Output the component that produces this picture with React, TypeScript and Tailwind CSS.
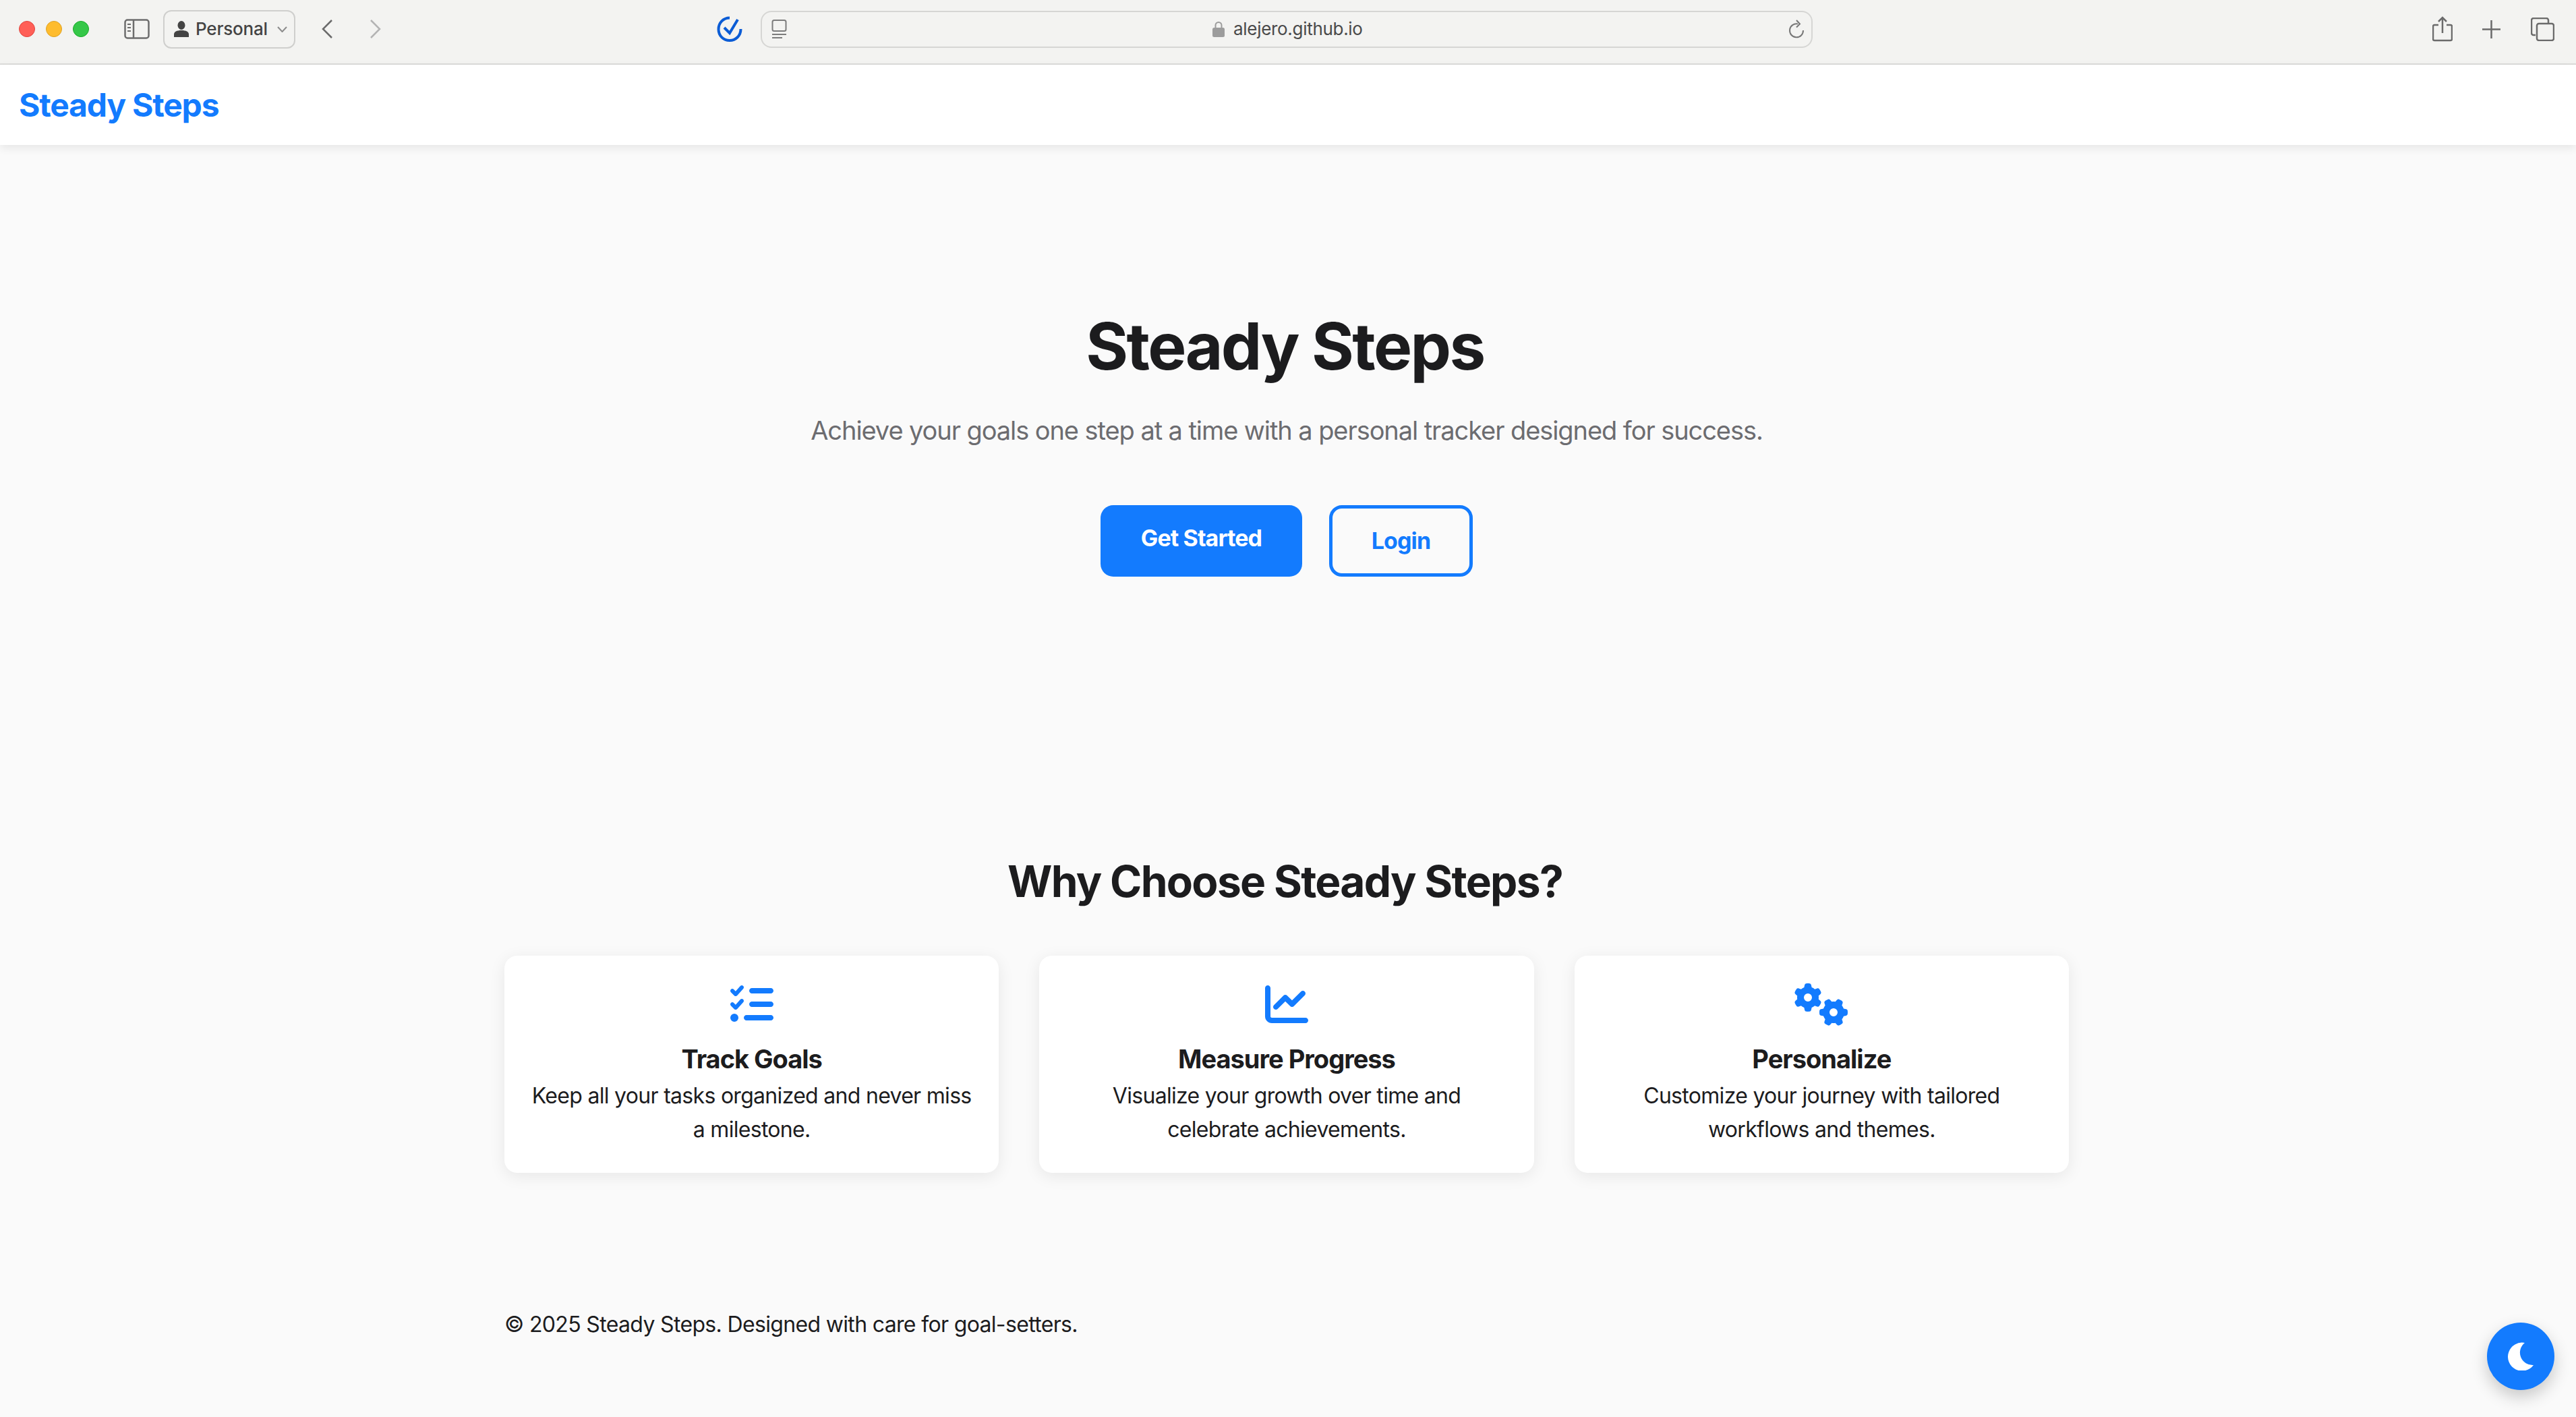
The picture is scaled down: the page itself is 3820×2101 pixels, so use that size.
import React from 'react';
import { FaListCheck, FaChartLine, FaGears } from 'react-icons/fa6';

const features = [
  { icon: <FaListCheck className="w-[64px] h-[64px]" />, title: 'Track Goals', lines: ['Keep all your tasks organized and never miss', 'a milestone.'] },
  { icon: <FaChartLine className="w-[64px] h-[64px]" />, title: 'Measure Progress', lines: ['Visualize your growth over time and', 'celebrate achievements.'] },
  { icon: <FaGears className="w-[80px] h-[64px]" />, title: 'Personalize', lines: ['Customize your journey with tailored', 'workflows and themes.'] },
];

const BrowserBar = () => (
  <div className="h-[96px] shrink-0 pb-[8px] flex items-center bg-[#f3f3f1] border-b-2 border-[#dcdcda] font-['Inter',sans-serif]">
    <div className="ml-[28px] flex gap-[16px]">
      <span className="w-[24px] h-[24px] rounded-full bg-[#ff5f57] border border-[#e0443e]" />
      <span className="w-[24px] h-[24px] rounded-full bg-[#febc2e] border border-[#dea123]" />
      <span className="w-[24px] h-[24px] rounded-full bg-[#35c748] border border-[#1aab29]" />
    </div>
    <svg className="ml-[52px] w-[38px] h-[30px] text-[#6d6d6d]" viewBox="0 0 38 30" fill="none" stroke="currentColor" strokeWidth="2.5">
      <rect x="1.5" y="1.5" width="35" height="27" rx="3.5" />
      <path d="M14 2v26" />
      <path d="M5 8h5M5 13h5M5 18h5" strokeWidth="2" />
    </svg>
    <div className="ml-[20px] w-[196px] h-[57px] flex items-center rounded-[12px] border-2 border-[#cfcfcd] text-[#444444]">
      <svg className="ml-[14px] w-[22px] h-[24px]" viewBox="0 0 22 24" fill="currentColor">
        <ellipse cx="11" cy="6.5" rx="5.5" ry="6.5" />
        <path d="M0 24v-4c0-4 4-6 11-6s11 2 11 6v4z" />
      </svg>
      <span className="ml-[10px] text-[26px] font-medium leading-none tracking-[-0.2px]">Personal</span>
      <svg className="ml-[14px] w-[15px] h-[9px] text-[#8c8c8c]" viewBox="0 0 15 9" fill="none" stroke="currentColor" strokeWidth="2">
        <path d="M1 1l6.5 7L14 1" />
      </svg>
    </div>
    <svg className="ml-[39px] w-[16px] h-[28px] text-[#6b6b6b]" viewBox="0 0 16 28" fill="none" stroke="currentColor" strokeWidth="2.5">
      <path d="M15 1L2 14l13 13" />
    </svg>
    <svg className="ml-[56px] w-[16px] h-[28px] text-[#b4b4b4]" viewBox="0 0 16 28" fill="none" stroke="currentColor" strokeWidth="2.5">
      <path d="M1 1l13 13L1 27" />
    </svg>
    <svg className="ml-[498px] w-[38px] h-[38px] text-[#0b5cd5]" viewBox="0 0 38 38" fill="none" stroke="currentColor" strokeWidth="4">
      <path d="M19 2.5C9.5 2.5 2.5 10 2.5 19.5S10 36 19 36s16.5-7 16.5-17" />
      <path d="M11 17l8 8L31 5" />
    </svg>
    <div className="ml-[27px] w-[1560px] h-[55px] flex items-center rounded-[16px] border-2 border-[#d6d6d4]">
      <svg className="ml-[14px] w-[23px] h-[28px] text-[#7c7c7c]" viewBox="0 0 23 28" fill="none" stroke="currentColor" strokeWidth="2">
        <rect x="1.5" y="1" width="20" height="16" rx="2.5" />
        <path d="M1 22h21M1 27h15" />
      </svg>
      <svg className="ml-[631px] w-[18px] h-[24px] text-[#9c9c9c]" viewBox="0 0 18 24" fill="currentColor">
        <path d="M3.5 10V6.5a5.5 5.5 0 0 1 11 0V10h-2V6.5a3.5 3.5 0 0 0-7 0V10z" />
        <rect x="0" y="10" width="18" height="14" rx="2.5" />
      </svg>
      <span className="ml-[13px] text-[26px] leading-none tracking-[-0.3px] text-[#4a4a4a]">alejero.github.io</span>
      <svg className="ml-auto mr-[10px] w-[24px] h-[28px] text-[#777777]" viewBox="0 0 24 28" fill="none" stroke="currentColor" strokeWidth="2">
        <path d="M14 6.5A10 10 0 1 0 22 16" />
        <path d="M12 1l5 5.5-5 5" />
      </svg>
    </div>
    <svg className="ml-[919px] w-[30px] h-[38px] text-[#6b6b6b]" viewBox="0 0 30 38" fill="none" stroke="currentColor" strokeWidth="2.5">
      <path d="M9 13H3a2 2 0 0 0-2 2v19a2 2 0 0 0 2 2h24a2 2 0 0 0 2-2V15a2 2 0 0 0-2-2h-6" />
      <path d="M15 25V2M9 8l6-6 6 6" />
    </svg>
    <svg className="ml-[44px] w-[27px] h-[27px] text-[#6b6b6b]" viewBox="0 0 27 27" fill="none" stroke="currentColor" strokeWidth="2.5">
      <path d="M13.5 0v27M0 13.5h27" />
    </svg>
    <svg className="ml-[45px] w-[35px] h-[35px] text-[#6b6b6b]" viewBox="0 0 35 35" fill="none" stroke="currentColor" strokeWidth="2.5">
      <path d="M7 26H4a3 3 0 0 1-3-3V4a3 3 0 0 1 3-3h19a3 3 0 0 1 3 3v4" />
      <rect x="9" y="9" width="25" height="25" rx="3" />
    </svg>
  </div>
);

export default function App() {
  return (
    <div className="relative h-[2101px] overflow-hidden flex flex-col bg-[#fafafa] font-['Inter',sans-serif] text-[#1c1c1e]">
      <BrowserBar />
      <nav className="relative h-[119px] shrink-0 flex items-center pl-[28px] bg-white shadow-[0_5px_12px_rgba(0,0,0,0.08)]">
        <span className="text-[48px] font-bold tracking-[-1.2px] text-[#137bfe]">Steady Steps</span>
      </nav>
      <main className="pr-[4px] flex flex-col items-center">
        <h1 className="mt-[241px] mr-[5px] text-[96px] leading-[115px] font-bold tracking-[-2.6px]">Steady Steps</h1>
        <p className="mt-[38px] text-[38px] leading-[58px] tracking-[-1.08px] text-[#6c6c70]">Achieve your goals one step at a time with a personal tracker designed for success.</p>
        <div className="mt-[82px] flex gap-[40px]">
          <button className="w-[299px] h-[106px] pb-[9px] rounded-[19px] bg-[#137bfe] text-white text-[34px] font-bold tracking-[-0.9px]">Get Started</button>
          <button className="w-[213px] h-[106px] pb-[2px] rounded-[19px] border-[5px] border-[#137bfe] text-[#137bfe] text-[34px] font-bold tracking-[-0.9px]">Login</button>
        </div>
        <h2 className="mt-[413px] mr-[5px] text-[64px] leading-[77px] font-bold tracking-[-1.7px]">Why Choose Steady Steps?</h2>
        <div className="mt-[72px] w-[2320px] grid grid-cols-3 gap-[60px]">
          {features.map((f) => (
            <div key={f.title} className="h-[322px] pt-[40px] flex flex-col items-center rounded-[19px] bg-white shadow-[0_5px_24px_rgba(0,0,0,0.08)]">
              <div className="h-[64px] flex items-center text-[#137bfe]">{f.icon}</div>
              <h3 className="mt-[24px] text-[38px] leading-[50px] font-bold tracking-[-1px]">{f.title}</h3>
              <div className="mt-[5px] flex flex-col items-center">
                {f.lines.map((l) => (
                  <p key={l} className="text-[32px] leading-[50px] tracking-[-0.7px]">{l}</p>
                ))}
              </div>
            </div>
          ))}
        </div>
        <p className="mt-[200px] w-[2320px] text-[32px] leading-[50px] tracking-[-0.66px]">© 2025 Steady Steps. Designed with care for goal-setters.</p>
      </main>
      <button className="absolute right-[32px] bottom-[40px] w-[100px] h-[100px] flex items-center justify-center rounded-full bg-[#137bfe] text-white shadow-[0_10px_24px_rgba(0,0,0,0.2)]">
        <svg className="w-[38px] h-[42px]" viewBox="0 0 38 42" fill="currentColor">
          <path d="M25 1A21 21 0 1 0 38 34A18.5 18.5 0 0 1 25 1Z" />
        </svg>
      </button>
    </div>
  );
}
